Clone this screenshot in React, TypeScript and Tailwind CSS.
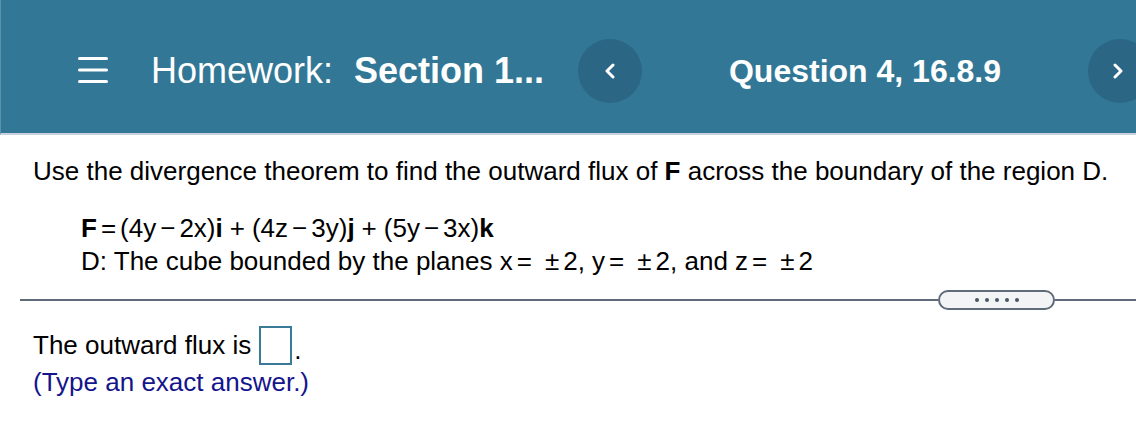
import React from 'react';

const Chevron: React.FC<{ dir: 'left' | 'right' }> = ({ dir }) => (
  <svg width="12" height="16" viewBox="0 0 12 16" fill="none" stroke="white" strokeWidth="3" strokeLinecap="round" strokeLinejoin="round">
    {dir === 'left' ? <polyline points="9,2 3,8 9,14" /> : <polyline points="3,2 9,8 3,14" />}
  </svg>
);

// operator with tight spacing, like the math renderer
const Op: React.FC<{ children: React.ReactNode }> = ({ children }) => (
  <span className="mx-[4px]">{children}</span>
);

const Plus: React.FC = () => <span className="mx-[7px]">+</span>;

const PlusMinusTwo: React.FC = () => (
  <>
    <span className="ml-[9px]">±</span>
    <span className="ml-[4px]">2</span>
  </>
);

const App: React.FC = () => {
  return (
    <div className="w-[1136px] h-[448px] bg-white overflow-hidden font-['Liberation_Sans',Arial,sans-serif] text-black">
      {/* --- Top Bar --- */}
      <div className="h-[135px] bg-[#327896] border-b-2 border-[#c9d2dc] border-l border-l-[#5b93ad] flex items-center pt-[8px] overflow-hidden">
        <div className="ml-[77px] shrink-0">
          <svg width="30" height="27" viewBox="0 0 30 27" stroke="white" strokeWidth="3" strokeLinecap="round">
            <line x1="1.5" y1="1.5" x2="28.5" y2="1.5" />
            <line x1="1.5" y1="13" x2="28.5" y2="13" />
            <line x1="1.5" y1="24.5" x2="28.5" y2="24.5" />
          </svg>
        </div>
        <div className="ml-[43px] w-[427px] shrink-0 text-white text-[36px] leading-none whitespace-nowrap">
          Homework:<span className="ml-[21px] font-bold">Section 1...</span>
        </div>
        <button className="w-[64px] h-[64px] shrink-0 rounded-full bg-[#2b6684] flex items-center justify-center">
          <Chevron dir="left" />
        </button>
        <div className="flex-1 text-center text-white font-bold text-[32px] leading-none whitespace-nowrap">
          Question 4, 16.8.9
        </div>
        <button className="w-[64px] h-[64px] shrink-0 -mr-[16px] rounded-full bg-[#2b6684] flex items-center justify-center pr-[4px]">
          <Chevron dir="right" />
        </button>
      </div>

      {/* --- Question --- */}
      <div className="px-[33px] text-[26px]">
        <p className="mt-[21px] leading-[30px] whitespace-nowrap">
          Use the divergence theorem to find the outward flux of <b>F</b> across the boundary of the region D.
        </p>
        <div className="mt-[26px] pl-[48px] leading-[33px] whitespace-nowrap">
          <div>
            <b>F</b><Op>=</Op>(4y<Op>−</Op>2x)<b>i</b><Plus />(4z<Op>−</Op>3y)<b>j</b><Plus />(5y<Op>−</Op>3x)<b>k</b>
          </div>
          <div>
            D: The cube bounded by the planes x<Op>=</Op><PlusMinusTwo />, y<Op>=</Op><PlusMinusTwo />, and z<Op>=</Op><PlusMinusTwo />
          </div>
        </div>
      </div>

      {/* --- Separator --- */}
      <div className="mt-[12px] pl-[20px] flex items-center">
        <div className="flex-1 h-[2px] bg-[#5f6b78]" />
        <div className="w-[117px] h-[20px] rounded-full border-2 border-[#5f6b78] bg-[#f3f4f6] flex items-center justify-center gap-[6px]">
          <span className="w-[4px] h-[4px] rounded-full bg-[#4b5563]" />
          <span className="w-[4px] h-[4px] rounded-full bg-[#4b5563]" />
          <span className="w-[4px] h-[4px] rounded-full bg-[#4b5563]" />
          <span className="w-[4px] h-[4px] rounded-full bg-[#4b5563]" />
          <span className="w-[4px] h-[4px] rounded-full bg-[#4b5563]" />
        </div>
        <div className="w-[81px] h-[2px] bg-[#5f6b78]" />
      </div>

      {/* --- Answer --- */}
      <div className="px-[33px] text-[26px]">
        <div className="mt-[15px] flex items-center h-[40px] whitespace-nowrap">
          <span>The outward flux is</span>
          <span className="ml-[8px] w-[33px] h-[39px] border-2 border-[#3a7a98]" />
          <span className="self-end leading-[30px] ml-[2px]">.</span>
        </div>
        <p className="mt-[2px] leading-[30px] text-[#14148c]">(Type an exact answer.)</p>
      </div>
    </div>
  );
};

export default App;
